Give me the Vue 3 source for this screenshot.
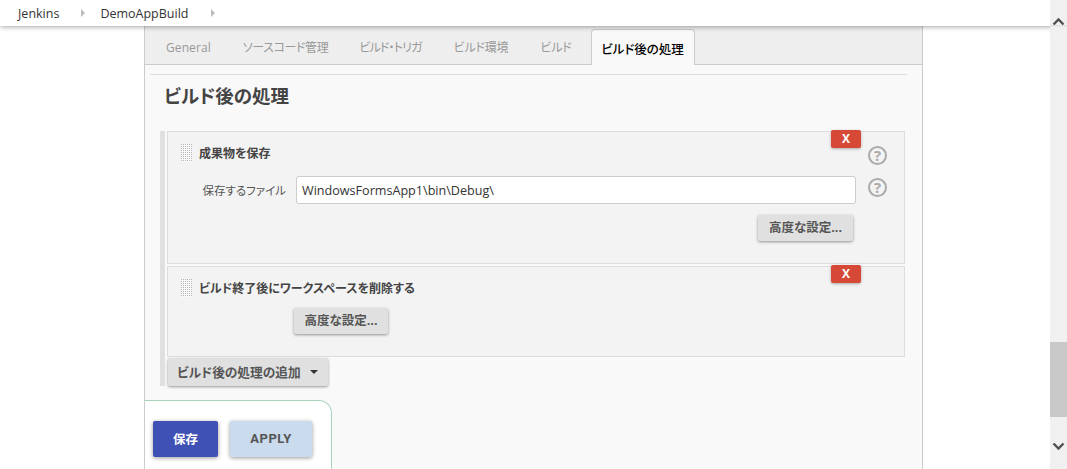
<script setup>
const tabs = ['General', 'ソースコード管理', 'ビルド・トリガ', 'ビルド環境', 'ビルド']
</script>

<template>
  <div class="page">
    <div class="main">
      <header class="crumbs">
        <span class="crumb">Jenkins</span>
        <span class="sep"></span>
        <span class="crumb">DemoAppBuild</span>
        <span class="sep"></span>
      </header>
      <div class="form">
        <nav class="tabs">
          <span v-for="t in tabs" :key="t" class="tab">{{ t }}</span>
          <span class="tab active">ビルド後の処理</span>
        </nav>
        <div class="rule"></div>
        <h2 class="title">ビルド後の処理</h2>
        <div class="list">
          <section class="block block-a">
            <button class="close">X</button>
            <div class="head">
              <span class="grip"></span>
              <span class="name">成果物を保存</span>
              <span class="help help-head">?</span>
            </div>
            <div class="field">
              <label class="label">保存するファイル</label>
              <div class="input">WindowsFormsApp1\bin\Debug\</div>
              <span class="help">?</span>
            </div>
            <div class="adv-right">
              <button class="btn">高度な設定...</button>
            </div>
          </section>
          <section class="block block-b">
            <button class="close">X</button>
            <div class="head">
              <span class="grip"></span>
              <span class="name">ビルド終了後にワークスペースを削除する</span>
            </div>
            <div class="adv-left">
              <button class="btn">高度な設定...</button>
            </div>
          </section>
          <button class="btn add">ビルド後の処理の追加<i class="caret"></i></button>
        </div>
        <div class="bar">
          <button class="save">保存</button>
          <button class="apply">APPLY</button>
        </div>
      </div>
    </div>
    <aside class="scroll">
      <svg class="arrow up" width="13" height="9" viewBox="0 0 13 9"><path d="M1.5 7.5 6.5 2.5 11.5 7.5" fill="none" stroke="#505050" stroke-width="2.4"/></svg>
      <div class="thumb"></div>
      <svg class="arrow down" width="13" height="9" viewBox="0 0 13 9"><path d="M1.5 1.5 6.5 6.5 11.5 1.5" fill="none" stroke="#505050" stroke-width="2.4"/></svg>
    </aside>
  </div>
</template>

<style>
html, body { margin: 0; background: #fff; overflow: hidden; }
</style>

<style scoped>
.page {
  width: 1067px; height: 469px; display: flex; overflow: hidden;
  font-family: "Open Sans", "Noto Sans CJK JP", sans-serif; color: #333; background: #fff;
  font-feature-settings: "palt";
}
.main { width: 1050px; display: flex; flex-direction: column; }
.crumbs {
  height: 26px; flex: none; background: #fff; display: flex; align-items: center;
  padding-left: 18px; font-size: 12.5px; color: #333; box-shadow: 0 1px 5px rgba(0,0,0,.35);
  position: relative; z-index: 2; width: 1067px; box-sizing: border-box;
}
.sep {
  width: 0; height: 0; border-left: 4px solid #bbb; border-top: 4px solid transparent;
  border-bottom: 4px solid transparent; margin: 0 15px 0 22px;
}
.crumb + .sep + .crumb + .sep { margin-left: 23px; }
.form {
  width: 779px; margin-left: 144px; height: 443px; box-sizing: border-box; background: #f9f9f9;
  border-left: 1px solid #ccc; border-right: 1px solid #ccc; display: flex; flex-direction: column;
}
.tabs {
  height: 39px; flex: none; box-sizing: border-box; background: #eee; border-bottom: 1px solid #ccc;
  display: flex; align-items: flex-end; padding-left: 5px;
}
.tab { padding: 0 11px; margin: 0 5px; height: 32px; line-height: 32px; color: #999; white-space: nowrap; font-size: 12px; letter-spacing: -.2px; }
.tab:first-child { letter-spacing: .1px; }
.tab:nth-child(2) { margin-right: 4px; letter-spacing: -.4px; }
.tab:nth-child(3) { letter-spacing: -.85px; }
.tab.active {
  margin-left: 3px; width: 104px; background: #f9f9f9; color: #000; font-weight: 500; font-size: 12.5px; letter-spacing: 0; height: 36px; line-height: 40px; margin-bottom: -1px;
  border: 1px solid #ccc; border-bottom: 0; border-radius: 4px 4px 0 0; padding: 0; text-align: center; box-sizing: border-box;
}
.rule { height: 1px; background: #ddd; margin: 9px 15px 0 5px; flex: none; }
.title { margin: 7px 0 0 19px; font-size: 18.5px; line-height: 27px; font-weight: 700; color: #444; height: 27px; }
.list {
  margin: 22px 17px 0 15px; border-left: 5px solid #e0e0e0; height: 255px; padding-left: 2px;
  display: flex; flex-direction: column; align-items: flex-start; flex: none; box-sizing: border-box;
}
.block { position: relative; width: 738px; box-sizing: border-box; background: #f3f3f3; border: 1px solid #ddd; flex: none; }
.block-a { height: 133px; }
.block-b { height: 91px; margin-top: 2px; }
.close {
  position: absolute; top: -2px; right: 43px; width: 30px; height: 18px; background: #d64937; color: #fff; border: 0; padding: 0;
  border-radius: 2px; font: 700 12px/18px "Open Sans", sans-serif; box-shadow: 0 1px 3px rgba(0,0,0,.3);
}
.head { display: flex; align-items: center; height: 17px; margin: 12px 0 0 13px; position: relative; }
.grip {
  width: 11px; height: 18px; flex: none;
  background-image: linear-gradient(#fafafa 1px, transparent 1px), linear-gradient(90deg, #fafafa 1px, transparent 1px);
  background-size: 2px 2px;
  background-position: 1px 1px;
  background-color: #b4b4b4;
}
.name { margin-left: 7px; font-size: 12px; font-weight: 700; color: #444; white-space: nowrap; }
.help {
  width: 19px; height: 19px; border-radius: 50%; border: 2px solid #aaa; color: #aaa; box-sizing: border-box;
  display: flex; align-items: center; justify-content: center; font: 700 15px/1 "Open Sans", sans-serif; flex: none;
}
.help-head { position: absolute; left: 687px; top: 2px; }
.field { display: flex; align-items: center; margin-top: 15px; height: 28px; }
.label { width: 118px; text-align: right; font-size: 11.5px; color: #555; flex: none; }
.input {
  margin-left: 10px; width: 560px; height: 28px; box-sizing: border-box; background: #fff; border: 1px solid #ccc; border-radius: 3px;
  padding-left: 5px; font-size: 12.6px; line-height: 27px; color: #333;
}
.field .help { margin: 0 0 5px 12px; }
.adv-right { display: flex; justify-content: flex-end; padding-right: 51px; margin-top: 11px; }
.adv-left { padding-left: 126px; margin-top: 12px; }
.btn {
  height: 26px; width: 95px; padding: 0; border: 0; border-radius: 2px; background: #e0e0e0; color: #555;
  font: 700 12.5px/26px "Open Sans", "Noto Sans CJK JP", sans-serif; box-shadow: 0 1px 3px rgba(0,0,0,.4); white-space: nowrap;
  font-feature-settings: "palt";
}
.adv-left .btn { width: 94px; }
.add { width: 160px; height: 28px; margin: 1px 0 0 1px; display: flex; align-items: center; padding-left: 9px; font-size: 12.7px; box-sizing: border-box; flex: none; }
.caret { width: 0; height: 0; border-top: 4px solid #333; border-left: 4px solid transparent; border-right: 4px solid transparent; margin-left: 9px; }
.bar {
  margin-top: 14px; width: 187px; height: 80px; box-sizing: border-box; background: #fff; border: 1px solid #a9d2bb; border-left: 0;
  border-radius: 0 13px 0 0; padding: 20px 0 0 8px; display: flex; gap: 12px; align-items: flex-start; flex: none;
}
.save, .apply { height: 36px; border: 0; border-radius: 2px; font-weight: 700; font-size: 12px; box-shadow: 0 1px 4px rgba(0,0,0,.4); padding: 0 0 2px; }
.save { width: 65px; background: #3f51b5; color: #fff; font-family: "Noto Sans CJK JP", sans-serif; font-size: 12.5px; }
.apply { width: 82px; background: #c9dbec; color: #555; font-family: Roboto, sans-serif; letter-spacing: .5px; font-size: 13px; }
.scroll { width: 17px; height: 469px; background: #f0f0f0; position: relative; z-index: 3; display: flex; flex-direction: column; flex: none; }
.scroll::before { content: ""; position: absolute; left: 0; right: 0; top: 25px; height: 2px; background: linear-gradient(#d8d8d8, #f0f0f0); }
.arrow { position: absolute; left: 2px; }
.up { top: 17px; }
.down { top: 442px; }
.thumb { position: absolute; top: 342px; left: 0; width: 17px; height: 75px; background: #c8c8c8; }
</style>
